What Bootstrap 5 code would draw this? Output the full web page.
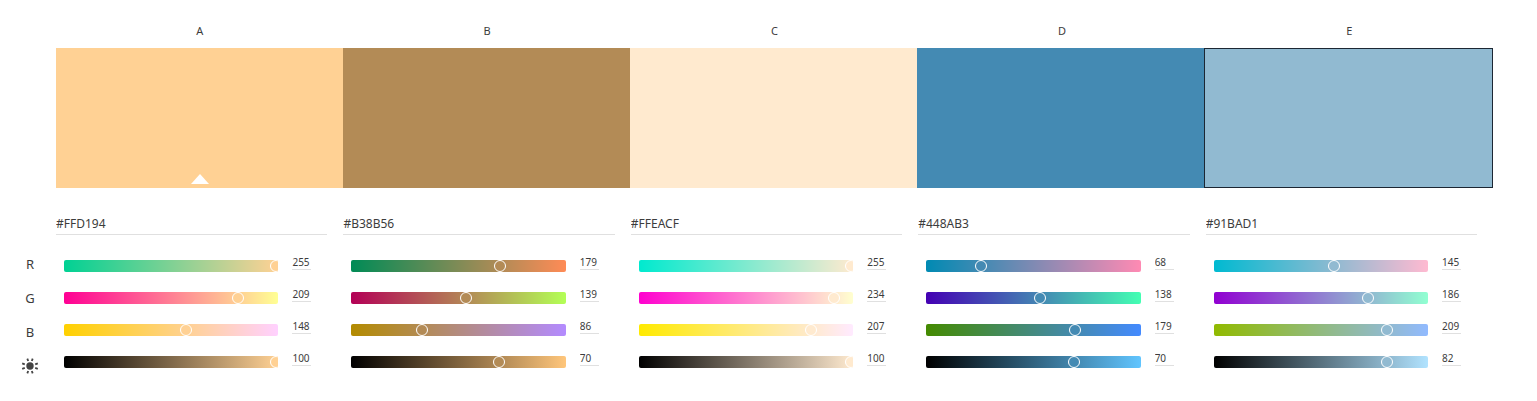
<!DOCTYPE html>
<html lang="en">
<head>
<meta charset="utf-8">
<meta name="viewport" content="width=device-width, initial-scale=1">
<title>Color palette</title>
<link href="https://cdn.jsdelivr.net/npm/bootstrap@5.3.0/dist/css/bootstrap.min.css" rel="stylesheet">
<style>
  body { font-family: "Noto Sans", "Open Sans", sans-serif; color: #3c3c3c; background: #fff; }
  .palette { padding: 22px 44px 24px 0; }
  .palette-top { padding-left: 56px; }
  .letter { font-size: 11px; line-height: 18px; }
  .swatch { height: 140px; border: 0 solid #1c2733; background: var(--c); }
  .swatch.active { border-width: 1px; }
  .base-mark { bottom: 4px; width: 18px; height: 10px; margin-left: -9px; }
  .rail { width: 56px; padding: 60px 0 0 4px; font-size: 13px; }
  .rail-item { height: 34px; }
  .field { border: 0; border-bottom: 1px solid #e0e0e0; border-radius: 0; padding: 0; color: #3c3c3c; background: transparent; outline: 0; }
  .hex { height: 23px; margin-bottom: 20px; font-size: 12px; line-height: 22px; }
  .hex-wrap { padding: 24px 16px 0 0; }
  .sliders { gap: 15px; padding: 0 32px 0 8px; }
  .slider-line { height: 17px; gap: 14px; }
  .value { width: 19px; height: 15px; font-size: 10px; line-height: 14px; }
  .track { height: 12px; margin-top: 5px; border-radius: 2px; background: linear-gradient(to right, var(--from), var(--to)); }
  /* wider than its track, so that the thumb can run past the clipped end */
  .track input { appearance: none; -webkit-appearance: none; display: block; width: calc(100% + 12px); height: 12px; margin: 0 0 0 -8px; background: transparent; outline: 0; }
  .track input::-webkit-slider-thumb { -webkit-appearance: none; width: 12px; height: 12px; border: 1px solid #fff; border-radius: 50%; background: var(--c); }
  .track input::-moz-range-thumb { box-sizing: border-box; width: 12px; height: 12px; border: 1px solid #fff; border-radius: 50%; background: var(--c); }
</style>
</head>
<body>
<main class="palette">
  <div class="palette-top">
    <div class="d-flex text-center mb-2" id="letters"></div>
    <div class="d-flex" id="swatches"></div>
  </div>
  <div class="d-flex">
    <div class="rail flex-shrink-0">
      <div class="rail-item d-flex align-items-center justify-content-center">R</div>
      <div class="rail-item d-flex align-items-center justify-content-center">G</div>
      <div class="rail-item d-flex align-items-center justify-content-center">B</div>
      <div class="rail-item d-flex align-items-center justify-content-center">
        <svg width="18" height="18" viewBox="0 0 18 18" role="img" aria-label="Brightness">
          <circle cx="9" cy="8" r="3.7" fill="#444"/>
          <path d="M7.2 3 6.3 .6M10.8 3l.9-2.4M7.2 13l-.9 2.4M10.8 13l.9 2.4M3.8 6.3 1.2 5.3M3.8 9.9l-2.6 1M14.2 6.3l2.6-1M14.2 9.9l2.6 1" stroke="#444" stroke-width="1.8"/>
        </svg>
      </div>
    </div>
    <div class="d-flex flex-fill" id="columns"></div>
  </div>
</main>
<script>
  const colors = [
    { name: "A", rgb: [255, 209, 148], level: 100, base: true },
    { name: "B", rgb: [179, 139, 86], level: 70 },
    { name: "C", rgb: [255, 234, 207], level: 100 },
    { name: "D", rgb: [68, 138, 179], level: 70 },
    { name: "E", rgb: [145, 186, 209], level: 82, active: true }
  ];
  const hex = rgb => "#" + rgb.map(v => v.toString(16).padStart(2, "0")).join("").toUpperCase();
  const withChannel = (rgb, i, v) => hex(rgb.map((old, n) => n === i ? v : old));

  function slider(label, value, max, from, to) {
    return `<div class="slider-line d-flex align-items-start">
      <div class="track flex-fill overflow-hidden" style="--from:${from};--to:${to}">
        <input type="range" min="0" max="${max}" value="${value}" aria-label="${label}">
      </div>
      <input class="field value flex-shrink-0" type="text" value="${value}" aria-label="${label} value">
    </div>`;
  }

  colors.forEach(({ name, rgb, level, base, active }) => {
    const own = hex(rgb), peak = Math.max(...rgb);
    const bright = hex(rgb.map(v => Math.round(v * 255 / peak)));
    letters.insertAdjacentHTML("beforeend", `<div class="letter col">${name}</div>`);
    swatches.insertAdjacentHTML("beforeend",
      `<button type="button" class="swatch col p-0 position-relative ${active ? "active" : ""}" style="--c:${own}" aria-label="Color ${name}">${
        base ? '<svg class="base-mark position-absolute start-50" viewBox="0 0 18 10" aria-hidden="true"><path d="M0 10 9 0l9 10z" fill="#fff"/></svg>' : ""}</button>`);
    columns.insertAdjacentHTML("beforeend",
      `<section class="col" style="--c:${own}">
        <div class="hex-wrap"><input class="field hex d-block w-100" type="text" value="${own}" aria-label="Hex code of color ${name}"></div>
        <div class="sliders d-flex flex-column">
          ${["Red", "Green", "Blue"].map((c, i) => slider(`${name} ${c}`, rgb[i], 255, withChannel(rgb, i, 0), withChannel(rgb, i, 255))).join("")}
          ${slider(`${name} Brightness`, level, 100, "#000000", bright)}
        </div>
      </section>`);
  });
</script>
<script src="https://cdn.jsdelivr.net/npm/bootstrap@5.3.0/dist/js/bootstrap.bundle.min.js"></script>
</body>
</html>
